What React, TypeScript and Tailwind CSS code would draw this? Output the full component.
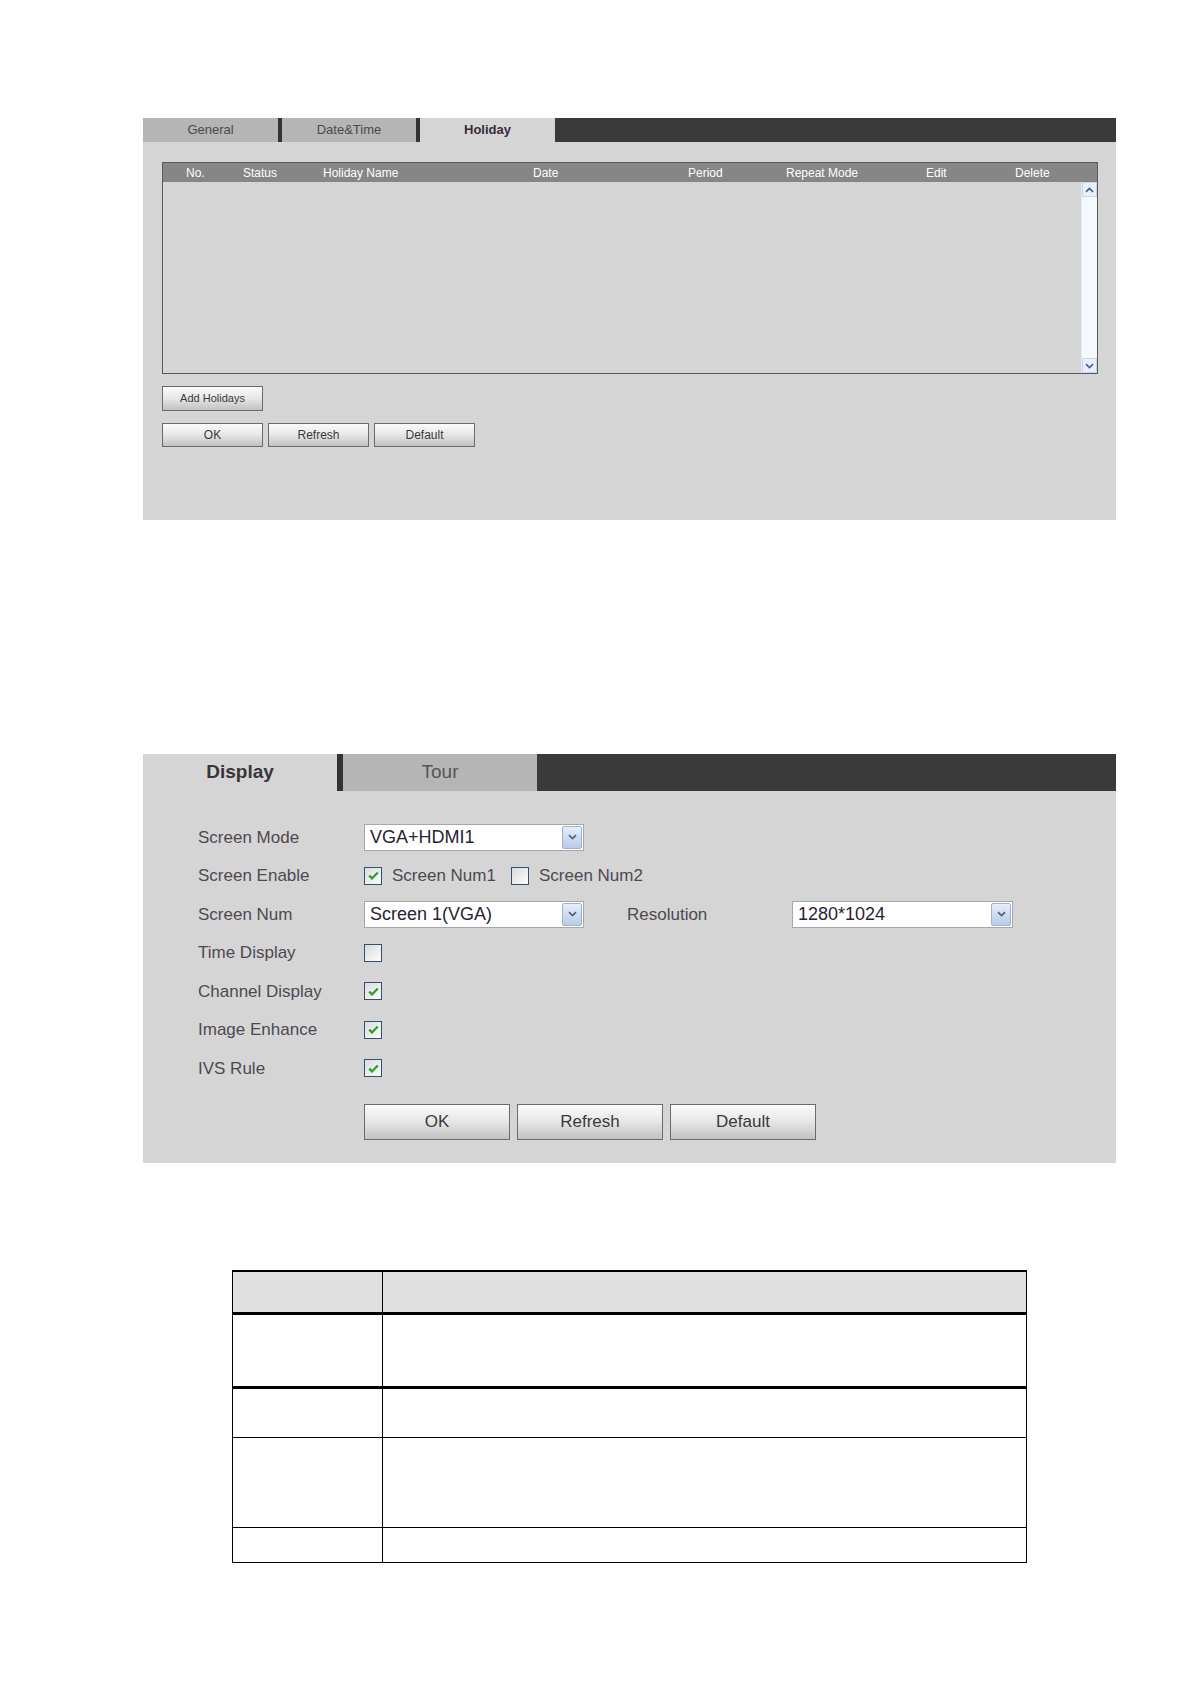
import React from 'react';

const FONT = "font-['Liberation_Sans',Arial,sans-serif]";

// small gray legacy button used in both panels
function GrayButton({ label, className }: { label: string; className: string }) {
  return (
    <button
      className={`flex items-center justify-center border border-[#6b6b6b] bg-linear-to-b from-[#fbfbfb] via-[#e6e6e6] to-[#c2c2c2] text-[#3a3a3a] ${className}`}
    >
      {label}
    </button>
  );
}

function Chevron({ up }: { up?: boolean }) {
  return (
    <svg width="9" height="6" viewBox="0 0 9 6" className={up ? 'rotate-180' : ''}>
      <path d="M1 1.2 L4.5 4.6 L8 1.2" fill="none" stroke="#4d6185" strokeWidth="1.7" />
    </svg>
  );
}

function Select({ value, width }: { value: string; width: string }) {
  return (
    <div className={`flex h-[27px] items-stretch border border-[#a7a7a7] bg-white ${width}`}>
      <div className="flex flex-1 items-center pl-[5px] text-[18px] text-[#2a2233]">{value}</div>
      <div className="m-px flex w-[20px] items-center justify-center rounded-[2px] border border-[#9fb3cf] bg-linear-to-b from-[#e6eefb] to-[#b9cbe6]">
        <Chevron />
      </div>
    </div>
  );
}

function Check({ checked }: { checked?: boolean }) {
  return (
    <div className="flex h-[18px] w-[18px] items-center justify-center border border-[#35506c] bg-linear-to-br from-[#dcdcdc] to-[#fbfbfb]">
      {checked && (
        <svg width="11" height="9" viewBox="0 0 11 9">
          <path d="M1.2 4.6 L4 7.4 L9.8 1.4" fill="none" stroke="#27a127" strokeWidth="2.2" />
        </svg>
      )}
    </div>
  );
}

const HOLIDAY_COLS: { label: string; w: string }[] = [
  { label: 'No.', w: 'w-[57px]' },
  { label: 'Status', w: 'w-[80px]' },
  { label: 'Holiday Name', w: 'w-[210px]' },
  { label: 'Date', w: 'w-[155px]' },
  { label: 'Period', w: 'w-[98px]' },
  { label: 'Repeat Mode', w: 'w-[140px]' },
  { label: 'Edit', w: 'w-[89px]' },
  { label: 'Delete', w: 'w-[60px]' },
];

function HolidayPanel() {
  return (
    <div className="w-[973px] bg-[#d5d5d5]">
      {/* Tabs */}
      <div className="flex h-[24px] text-[13px]">
        <div className="flex w-[135px] items-center justify-center bg-[#b5b5b5] text-[#4a4a4a]">General</div>
        <div className="w-[4px] bg-[#333]" />
        <div className="flex w-[134px] items-center justify-center bg-[#b5b5b5] text-[#4a4a4a]">Date&amp;Time</div>
        <div className="w-[4px] bg-[#333]" />
        <div className="flex w-[135px] items-center justify-center bg-[#d5d5d5] font-bold text-[#3a2b3a]">Holiday</div>
        <div className="flex-1 bg-[#3a3a3a]" />
      </div>

      <div className="px-[19px] pt-[20px] pb-[73px]">
        {/* Table */}
        <div className="w-[936px] border border-[#5a5a5a]">
          <div className="flex h-[19px] items-center bg-[#868686] pl-[23px] text-[12px] text-white">
            {HOLIDAY_COLS.map(c => (
              <div key={c.label} className={c.w}>{c.label}</div>
            ))}
          </div>
          <div className="flex h-[191px] justify-end">
            <div className="flex w-[16px] flex-col justify-between border-l border-[#e6ecf4] bg-[#f5f8fd]">
              <div className="flex h-[15px] items-center justify-center border border-[#c9d6ea] bg-[#e9f0fb]">
                <Chevron up />
              </div>
              <div className="flex h-[15px] items-center justify-center border border-[#c9d6ea] bg-[#e9f0fb]">
                <Chevron />
              </div>
            </div>
          </div>
        </div>

        <GrayButton label="Add Holidays" className="mt-[12px] h-[25px] w-[101px] text-[11px]" />
        <div className="mt-[12px] flex gap-[5px]">
          <GrayButton label="OK" className="h-[24px] w-[101px] text-[12px]" />
          <GrayButton label="Refresh" className="h-[24px] w-[101px] text-[12px]" />
          <GrayButton label="Default" className="h-[24px] w-[101px] text-[12px]" />
        </div>
      </div>
    </div>
  );
}

function Row({ label, children }: { label: string; children?: React.ReactNode }) {
  return (
    <div className="flex h-[38.5px] items-center">
      <div className="w-[166px] text-[17px] text-[#4f4853]">{label}</div>
      <div className="flex items-center">{children}</div>
    </div>
  );
}

function DisplayPanel() {
  return (
    <div className="w-[973px] bg-[#d5d5d5]">
      {/* Tabs */}
      <div className="flex h-[37px] text-[19px]">
        <div className="flex w-[194px] items-center justify-center bg-[#d5d5d5] font-bold text-[#3a3338]">Display</div>
        <div className="w-[6px] bg-[#333]" />
        <div className="flex w-[194px] items-center justify-center bg-[#b5b5b5] text-[#555]">Tour</div>
        <div className="flex-1 bg-[#3a3a3a]" />
      </div>

      <div className="pl-[55px] pt-[27px] pb-[23px]">
        <Row label="Screen Mode">
          <Select value="VGA+HDMI1" width="w-[220px]" />
        </Row>
        <Row label="Screen Enable">
          <Check checked />
          <span className="ml-[10px] w-[119px] text-[17px] text-[#4f4853]">Screen Num1</span>
          <Check />
          <span className="ml-[10px] text-[17px] text-[#4f4853]">Screen Num2</span>
        </Row>
        <Row label="Screen Num">
          <Select value="Screen 1(VGA)" width="w-[220px]" />
          <span className="ml-[43px] w-[165px] text-[17px] text-[#4f4853]">Resolution</span>
          <Select value="1280*1024" width="w-[221px]" />
        </Row>
        <Row label="Time Display">
          <Check />
        </Row>
        <Row label="Channel Display">
          <Check checked />
        </Row>
        <Row label="Image Enhance">
          <Check checked />
        </Row>
        <Row label="IVS Rule">
          <Check checked />
        </Row>

        <div className="mt-[16px] ml-[166px] flex gap-[7px]">
          <GrayButton label="OK" className="h-[36px] w-[146px] text-[17px]" />
          <GrayButton label="Refresh" className="h-[36px] w-[146px] text-[17px]" />
          <GrayButton label="Default" className="h-[36px] w-[146px] text-[17px]" />
        </div>
      </div>
    </div>
  );
}

function BlankTable() {
  const rows = [
    { h: 'h-[74px]', border: 'border-b-[3px]' },
    { h: 'h-[49px]', border: 'border-b' },
    { h: 'h-[90px]', border: 'border-b' },
    { h: 'h-[34px]', border: '' },
  ];
  return (
    <div className="ml-[89px] w-[795px] border-x border-t-2 border-b border-black">
      <div className="flex h-[43px] border-b-[3px] border-black bg-[#e0e0e0]">
        <div className="w-[150px] border-r border-black" />
        <div className="flex-1" />
      </div>
      {rows.map((r, i) => (
        <div key={i} className={`flex border-black ${r.h} ${r.border}`}>
          <div className="w-[150px] border-r border-black" />
          <div className="flex-1" />
        </div>
      ))}
    </div>
  );
}

export default function App() {
  return (
    <div className={`min-h-[1684px] w-[1191px] bg-white pl-[143px] pt-[118px] ${FONT}`}>
      <HolidayPanel />
      <div className="h-[234px]" />
      <DisplayPanel />
      <div className="h-[107px]" />
      <BlankTable />
    </div>
  );
}
